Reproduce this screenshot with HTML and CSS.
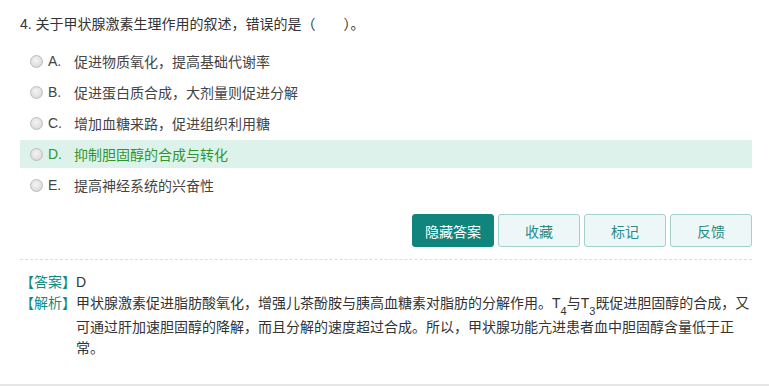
FILE: index.html
```html
<!DOCTYPE html>
<html lang="zh-CN">
<head>
    <meta charset="UTF-8">
    <title>甲状腺激素</title>
    <link rel="stylesheet" href="styles.css">
</head>
<body>
    <div class="question">
        <div class="title">4. 关于甲状腺激素生理作用的叙述，错误的是（&emsp;&emsp;）。</div>
        <ul class="options">
            <li class="option"><span class="radio"></span><span class="letter">A.</span><span class="text">促进物质氧化，提高基础代谢率</span></li>
            <li class="option"><span class="radio"></span><span class="letter">B.</span><span class="text">促进蛋白质合成，大剂量则促进分解</span></li>
            <li class="option"><span class="radio"></span><span class="letter">C.</span><span class="text">增加血糖来路，促进组织利用糖</span></li>
            <li class="option correct"><span class="radio"></span><span class="letter">D.</span><span class="text">抑制胆固醇的合成与转化</span></li>
            <li class="option"><span class="radio"></span><span class="letter">E.</span><span class="text">提高神经系统的兴奋性</span></li>
        </ul>
        <div class="actions">
            <button class="btn btn-primary">隐藏答案</button>
            <button class="btn">收藏</button>
            <button class="btn">标记</button>
            <button class="btn">反馈</button>
        </div>
        <div class="answer">
            <div class="row"><span class="label">【答案】</span><span class="value">D</span></div>
            <div class="row"><span class="label">【解析】</span><span class="value">甲状腺激素促进脂肪酸氧化，增强儿茶酚胺与胰高血糖素对脂肪的分解作用。T<sub>4</sub>与T<sub>3</sub>既促进胆固醇的合成，又可通过肝加速胆固醇的降解，而且分解的速度超过合成。所以，甲状腺功能亢进患者血中胆固醇含量低于正常。</span></div>
        </div>
    </div>
</body>
</html>
```

FILE: styles.css
```css
body {
    margin: 0;
    padding: 0;
    font-family: "Liberation Sans", "Noto Sans CJK SC", sans-serif;
    font-size: 14px;
    color: #333;
    background-color: #fff;
}

.question {
    padding: 10px 17px 0 20px;
    height: 374px;
    border-bottom: 2px solid #e6e6e6;
}

.title {
    line-height: 28px;
    color: #333;
}

.options {
    list-style: none;
    margin: 9px 0 0;
    padding: 0;
}

.option {
    display: flex;
    align-items: center;
    height: 28px;
    margin-bottom: 3px;
    padding-left: 10px;
    color: #444;
}

.option.correct {
    background-color: #ddf2eb;
    color: #2e962e;
}

.radio {
    width: 11px;
    height: 11px;
    border: 1px solid #bcbcbc;
    border-radius: 50%;
    background: radial-gradient(circle at 45% 40%, #f4f4f4 0%, #e0e0e0 60%, #cfcfcf 100%);
    margin-right: 5px;
}

.letter {
    width: 26px;
}

.actions {
    display: flex;
    justify-content: flex-end;
    gap: 4px;
    margin-top: 15px;
}

.btn {
    width: 82px;
    height: 33px;
    font-family: "Noto Sans CJK SC", sans-serif;
    font-size: 14px;
    color: #2b8a86;
    background-color: #eef7f7;
    border: 1px solid #a3cfcd;
    border-radius: 3px;
    cursor: pointer;
}

.btn-primary {
    color: #fff;
    background-color: #0f857d;
    border-color: #0f857d;
}

.answer {
    border-top: 1px dashed #dcdcdc;
    margin-top: 12px;
    padding-top: 12px;
}

.row {
    display: flex;
    line-height: 21px;
}

.label {
    flex-shrink: 0;
    color: #138a80;
}

.value {
    color: #333;
    width: 676px;
}

sub {
    font-size: 11px;
    line-height: 1;
    vertical-align: -7px;
    color: #333;
}
```
